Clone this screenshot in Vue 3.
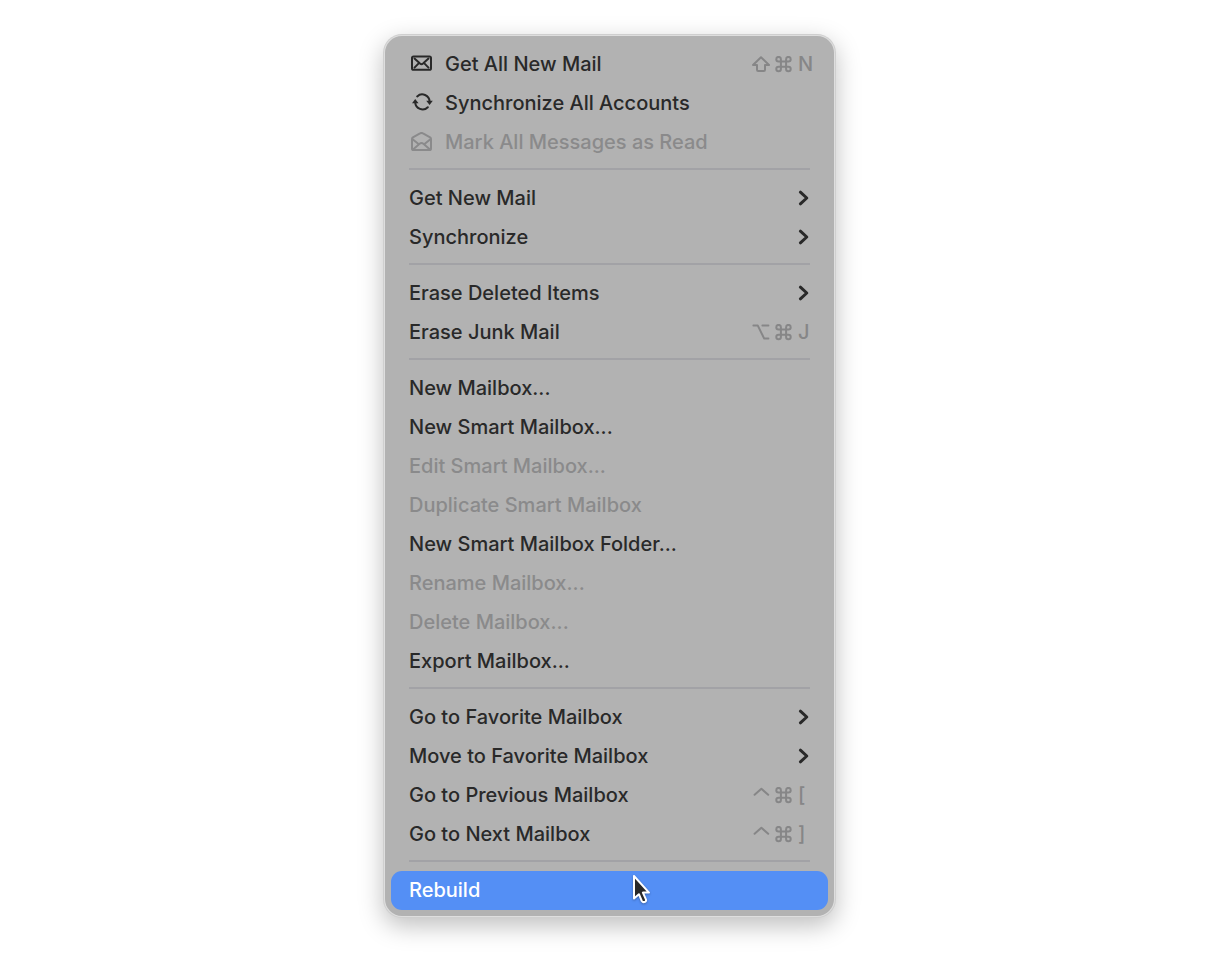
<script setup>
const groups = [
  [
    { label: 'Get All New Mail', icon: 'mail', keys: ['Shift', 'Command', 'N'] },
    { label: 'Synchronize All Accounts', icon: 'sync' },
    { label: 'Mark All Messages as Read', icon: 'open', disabled: true },
  ],
  [
    { label: 'Get New Mail', submenu: true },
    { label: 'Synchronize', submenu: true },
  ],
  [
    { label: 'Erase Deleted Items', submenu: true },
    { label: 'Erase Junk Mail', keys: ['Option', 'Command', 'J'] },
  ],
  [
    { label: 'New Mailbox...' },
    { label: 'New Smart Mailbox...' },
    { label: 'Edit Smart Mailbox...', disabled: true },
    { label: 'Duplicate Smart Mailbox', disabled: true },
    { label: 'New Smart Mailbox Folder...' },
    { label: 'Rename Mailbox...', disabled: true },
    { label: 'Delete Mailbox...', disabled: true },
    { label: 'Export Mailbox...' },
  ],
  [
    { label: 'Go to Favorite Mailbox', submenu: true },
    { label: 'Move to Favorite Mailbox', submenu: true },
    { label: 'Go to Previous Mailbox', keys: ['Control', 'Command', '['] },
    { label: 'Go to Next Mailbox', keys: ['Control', 'Command', ']'] },
  ],
  [{ label: 'Rebuild', active: true }],
]

const modifiers = {
  Shift: 'M10 1.2 18 9H14V13.8Q14 15 12.8 15H7.2Q6 15 6 13.8V9H2Z',
  Option: 'M2.4 1.6H6.8L13.2 14.6H17.4M11.4 1.6H17.4',
  Control: 'M3.6 7.8 10.4 1.8 17.2 7.8',
  Command:
    'M7.9 5.4V3.2A2.3 2.3 0 1 0 5.6 5.5H15.4A2.3 2.3 0 1 0 13.1 3.2V13A2.3 2.3 0 1 0 15.4 10.7H5.6A2.3 2.3 0 1 0 7.9 13Z',
}
</script>

<template>
  <main class="desktop">
    <div class="menu" role="menu" aria-label="Mailbox">
      <div v-for="(group, g) in groups" :key="g" class="group" role="group">
        <button
          v-for="item in group"
          :key="item.label"
          type="button"
          role="menuitem"
          class="item"
          :class="{ active: item.active }"
          :disabled="item.disabled"
          :aria-haspopup="item.submenu ? 'menu' : undefined"
        >
          <svg v-if="item.icon" class="icon" viewBox="0 0 22 22" aria-hidden="true">
            <g v-if="item.icon === 'mail'">
              <rect x="1" y="2.4" width="19" height="13.4" rx="1.6" />
              <path d="M3.5 4.6 9 9.6Q10.5 10.9 12 9.6L17.5 4.6M3.5 13.6 7.9 9.1M17.5 13.6 13.1 9.1" />
            </g>
            <g v-else-if="item.icon === 'sync'">
              <path d="M6.2 3.4A7.4 7.4 0 0 1 18.6 8.6M16.8 14.2A7.4 7.4 0 0 1 4.2 9.4" />
              <path class="solid" d="M15.2 7.8H21.8L18.6 12ZM1 10.2H7.6L4.2 6Z" />
            </g>
            <g v-else>
              <path d="M1 6.9Q1 5.9 1.9 5.3L9 1.4Q10.5.5 12 1.4L19.1 5.3Q20 5.9 20 6.9V16.4Q20 18 18.4 18H2.6Q1 18 1 16.4ZM1.6 7.2 7.8 12.2M19.4 7.2 13.2 12.2M2.6 17 8.6 11.8Q10.5 10.3 12.4 11.8L18.4 17" />
            </g>
          </svg>
          <span class="label">{{ item.label }}</span>
          <svg v-if="item.submenu" class="chevron" viewBox="0 0 12 18" aria-hidden="true">
            <path d="M2.4 2.2 8.8 8 2.4 13.8" />
          </svg>
          <span v-if="item.keys" class="keys">
            <kbd v-for="key in item.keys" :key="key">
              <svg v-if="modifiers[key]" class="modifier" viewBox="0 0 20 18" role="img" :aria-label="key">
                <path :d="modifiers[key]" />
              </svg>
              <template v-else>{{ key }}</template>
            </kbd>
          </span>
        </button>
      </div>
      <svg class="pointer" viewBox="0 0 20 32" aria-hidden="true">
        <path d="M2 2V24.4L6.9 20.2L9.8 27Q11 28.8 13 27.8Q14.6 27 13.8 25.2L10.9 18.6H17Z" />
      </svg>
    </div>
  </main>
</template>

<style>
body {
  margin: 0;
  background: #fff;
}
</style>

<style scoped>
.desktop {
  display: flex;
  justify-content: center;
  padding: 36px 0 58px 3px;
  font-family: Inter, "Liberation Sans", sans-serif;
}

.menu {
  position: relative;
  box-sizing: border-box;
  width: 449px;
  max-width: 100%;
  padding: 9px 6px 6px;
  border-radius: 17px;
  background: #b2b2b2;
  box-shadow:
    0 0 0 1px #dedede,
    0 0 0 2px #cfcfcf,
    0 8px 24px 2px rgba(0, 0, 0, 0.25);
}

.group + .group::before {
  content: "";
  display: block;
  height: 2px;
  margin: 6px 18px 9px;
  background: #a2a2a6;
}

.item {
  display: flex;
  align-items: center;
  box-sizing: border-box;
  width: 100%;
  height: 39px;
  padding: 0 18px;
  border: 0;
  border-radius: 11px;
  background: transparent;
  color: #292929;
  font: 500 20px/39px Inter, "Liberation Sans", sans-serif;
  text-align: left;
  white-space: nowrap;
}

.item:disabled {
  color: #8a8a8b;
}

.item.active {
  background: #548ff5;
  color: #fff;
}

.icon {
  width: 22px;
  height: 22px;
  margin: 0 12px 0 2px;
  fill: none;
  stroke: currentColor;
  stroke-width: 2;
  stroke-linecap: round;
  stroke-linejoin: round;
}

.icon .solid {
  fill: currentColor;
  stroke: none;
}

.label {
  flex: 1;
}

.chevron {
  width: 12px;
  height: 18px;
  fill: none;
  stroke: currentColor;
  stroke-width: 3;
  stroke-linecap: round;
  stroke-linejoin: round;
}

.keys {
  display: grid;
  grid-template-columns: 22px 25px 12px;
  color: #868687;
}

.keys kbd {
  display: flex;
  align-items: center;
  font: inherit;
}

.modifier {
  width: 20px;
  height: 18px;
  fill: none;
  stroke: currentColor;
  stroke-width: 2;
  stroke-linecap: round;
  stroke-linejoin: round;
}

.pointer {
  position: absolute;
  top: 838px;
  left: 247px;
  width: 20px;
  height: 32px;
  fill: #292929;
  stroke: #fff;
  stroke-width: 2;
  stroke-linejoin: round;
  filter: drop-shadow(0 1px 1px rgba(0, 0, 0, 0.3));
}
</style>
